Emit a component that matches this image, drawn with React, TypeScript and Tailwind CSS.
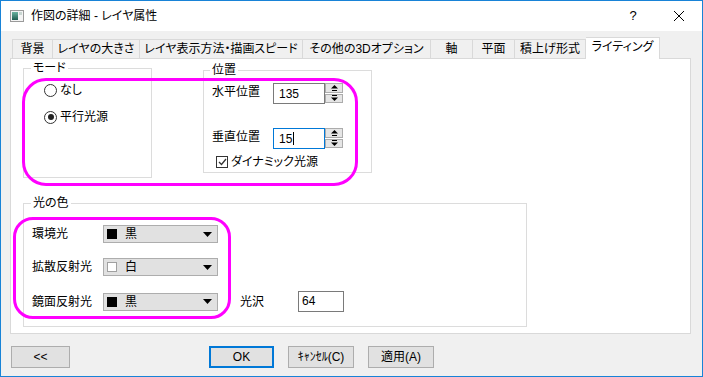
import React from 'react';

const font = "[font-family:'Liberation_Sans','Noto_Sans_CJK_JP',sans-serif] [font-feature-settings:'palt']";

const tabs = [
  { label: '背景', w: 'w-[41px]' },
  { label: 'レイヤの大きさ', w: 'w-[87px]' },
  { label: 'レイヤ表示方法・描画スピード', w: 'w-[163px]' },
  { label: 'その他の3Dオプション', w: 'w-[128px]' },
  { label: '軸', w: 'w-[42px]' },
  { label: '平面', w: 'w-[42px]' },
  { label: '積上げ形式', w: 'w-[71px]' },
];

const Radio: React.FC<{ label: string; checked?: boolean }> = ({ label, checked }) => (
  <div className="flex items-center h-[14px] gap-[3px]">
    <span className="w-[13px] h-[13px] rounded-full border border-[#333] bg-white flex items-center justify-center">
      {checked && <span className="w-[6px] h-[6px] rounded-full bg-[#222]" />}
    </span>
    <span className="text-[12px] leading-[14px]">{label}</span>
  </div>
);

const Spinner: React.FC = () => (
  <div className="flex flex-col w-[18px] h-[20px] gap-px">
    <div className="flex-1 bg-[#e5e5e5] border border-[#acacac] flex items-center justify-center">
      <svg width="7" height="6" viewBox="0 0 7 6">
        <path d="M3.5 0 L7 3.5 L0 3.5 Z" fill="#000" />
        <rect x="1" y="5" width="5" height="1" fill="#000" />
      </svg>
    </div>
    <div className="flex-1 bg-[#e5e5e5] border border-[#acacac] flex items-center justify-center">
      <svg width="7" height="6" viewBox="0 0 7 6">
        <rect x="1" y="0" width="5" height="1" fill="#000" />
        <path d="M0 2.5 L7 2.5 L3.5 6 Z" fill="#000" />
      </svg>
    </div>
  </div>
);

const SpinInput: React.FC<{ value: string; focused?: boolean }> = ({ value, focused }) => (
  <div className="flex items-start">
    <div
      className={`w-[52px] h-[21px] bg-white border flex items-center pl-[5px] text-[12px] ${
        focused ? 'border-[#0078d7]' : 'border-[#7a7a7a]'
      }`}
    >
      {value}
      {focused && <span className="w-px h-[13px] bg-black ml-px" />}
    </div>
    <Spinner />
  </div>
);

const ColorSelect: React.FC<{ name: string; color: 'black' | 'white' }> = ({ name, color }) => (
  <div className="w-[115px] h-[18px] bg-[#e1e1e1] border border-[#adadad] flex items-center">
    <span
      className={`ml-[3px] w-[10px] h-[10px] ${color === 'black' ? 'bg-black' : 'bg-white border border-[#a0a0a0]'}`}
    />
    <span className="ml-[8px] text-[12px] leading-[14px] flex-1">{name}</span>
    <svg width="9" height="5" viewBox="0 0 9 5" className="mr-[5px]">
      <path d="M0 0 L9 0 L4.5 5 Z" fill="#000" />
    </svg>
  </div>
);

const Btn: React.FC<{ label: string; w: string; primary?: boolean; className?: string }> = ({
  label,
  w,
  primary,
  className = '',
}) => (
  <button
    className={`${w} h-[22px] bg-[#e1e1e1] text-[12px] leading-none flex items-center justify-center ${
      primary ? 'border-2 border-[#0078d7]' : 'border border-[#adadad]'
    } ${className}`}
  >
    {label}
  </button>
);

export default function App() {
  return (
    <div className={`w-[703px] h-[377px] border border-[#1883d7] bg-[#f0f0f0] flex flex-col text-black ${font}`}>
      {/* title bar */}
      <div className="h-[30px] bg-white flex items-center shrink-0">
        <svg width="14" height="12" viewBox="0 0 14 12" className="ml-[9px]">
          <rect x="0.5" y="0.5" width="13" height="11" fill="#f4f4f4" stroke="#9a9a9a" />
          <defs>
            <linearGradient id="ic" x1="0" y1="0" x2="0" y2="1">
              <stop offset="0" stopColor="#6bb3a0" />
              <stop offset="1" stopColor="#1f5e52" />
            </linearGradient>
          </defs>
          <rect x="2" y="2" width="6" height="8" fill="url(#ic)" />
          <rect x="9" y="2" width="3" height="3" fill="#c9d6d2" />
        </svg>
        <span className="ml-[7px] text-[12px] leading-none">作図の詳細 - レイヤ属性</span>
        <div className="flex-1" />
        <div className="w-[46px] h-full flex items-center justify-center text-[13px]">?</div>
        <div className="w-[46px] h-full flex items-center justify-center">
          <svg width="10" height="10" viewBox="0 0 10 10">
            <path d="M0 0 L10 10 M10 0 L0 10" stroke="#000" strokeWidth="1" />
          </svg>
        </div>
      </div>

      {/* tabs */}
      <div className="h-[27px] flex items-end pl-[11px] shrink-0 text-[12px]">
        {tabs.map((t, i) => (
          <div
            key={t.label}
            className={`${t.w} h-[19px] border-t border-[#d9d9d9] ${i === 0 ? 'border-l' : ''} border-r bg-[#f0f0f0] flex items-center justify-center whitespace-nowrap leading-none`}
          >
            {t.label}
          </div>
        ))}
        <div className="w-[74px] h-[22px] -mb-px relative z-10 bg-white border-t border-r border-[#d9d9d9] flex items-center justify-center whitespace-nowrap leading-none pb-[3px]">
          ライティング
        </div>
      </div>

      {/* panel */}
      <div className="relative ml-[9px] w-[681px] h-[276px] bg-white border border-[#d9d9d9] shrink-0 pl-[12px] pt-[2px] text-[12px]">
        <div className="flex items-start">
          <fieldset className="w-[129px] h-[117px] border border-[#dcdcdc]">
            <legend className="ml-[7px] px-[2px] leading-[14px]">モード</legend>
            <div className="flex flex-col gap-[13px] pt-[8px] pl-[20px]">
              <Radio label="なし" />
              <Radio label="平行光源" checked />
            </div>
          </fieldset>

          <fieldset className="ml-[51px] mt-[2px] w-[169px] h-[110px] border border-[#dcdcdc]">
            <legend className="ml-[6px] px-[2px] leading-[14px]">位置</legend>
            <div className="flex flex-col pt-[6px] pl-[8px]">
              <div className="flex items-center">
                <span className="w-[61px] pb-[4px] leading-[14px]">水平位置</span>
                <SpinInput value="135" />
              </div>
              <div className="flex items-center mt-[24px]">
                <span className="w-[61px] pb-[4px] leading-[14px]">垂直位置</span>
                <SpinInput value="15" focused />
              </div>
              <div className="flex items-center mt-[6px] ml-[4px] gap-[3px]">
                <span className="w-[12px] h-[12px] border border-[#333] bg-white flex items-center justify-center">
                  <svg width="9" height="8" viewBox="0 0 9 8">
                    <path d="M1 4 L3.5 6.5 L8 1" fill="none" stroke="#333" strokeWidth="1.3" />
                  </svg>
                </span>
                <span className="leading-[14px]">ダイナミック光源</span>
              </div>
            </div>
          </fieldset>
        </div>

        <fieldset className="mt-[18px] w-[504px] h-[131px] border border-[#dcdcdc]">
          <legend className="ml-[7px] px-[2px] leading-[14px]">光の色</legend>
          <div className="flex flex-col gap-[15px] pt-[15px] pl-[8px]">
            <div className="flex items-center">
              <span className="w-[71px] leading-[14px]">環境光</span>
              <ColorSelect name="黒" color="black" />
            </div>
            <div className="flex items-center">
              <span className="w-[71px] leading-[14px]">拡散反射光</span>
              <ColorSelect name="白" color="white" />
            </div>
            <div className="flex items-center">
              <span className="w-[71px] leading-[14px]">鏡面反射光</span>
              <ColorSelect name="黒" color="black" />
              <span className="ml-[22px] w-[58px] leading-[14px]">光沢</span>
              <div className="w-[46px] h-[21px] border border-[#7a7a7a] bg-white pl-[3px] pt-[2px] text-[12px] leading-[14px]">
                64
              </div>
            </div>
          </div>
        </fieldset>

        {/* highlight marks */}
        <div className="absolute left-[11px] top-[19px] w-[336px] h-[108px] border-[3px] border-[#ff00ff] rounded-[24px] pointer-events-none" />
        <div className="absolute left-[2px] top-[158px] w-[218px] h-[102px] border-[3px] border-[#ff00ff] rounded-[20px] pointer-events-none" />
      </div>

      {/* buttons */}
      <div className="flex mt-[12px] pl-[10px]">
        <Btn label="<<" w="w-[59px]" />
        <Btn label="OK" w="w-[65px]" primary className="ml-[139px]" />
        <Btn label="ｷｬﾝｾﾙ(C)" w="w-[66px]" className="ml-[14px]" />
        <Btn label="適用(A)" w="w-[66px]" className="ml-[14px]" />
      </div>
    </div>
  );
}
